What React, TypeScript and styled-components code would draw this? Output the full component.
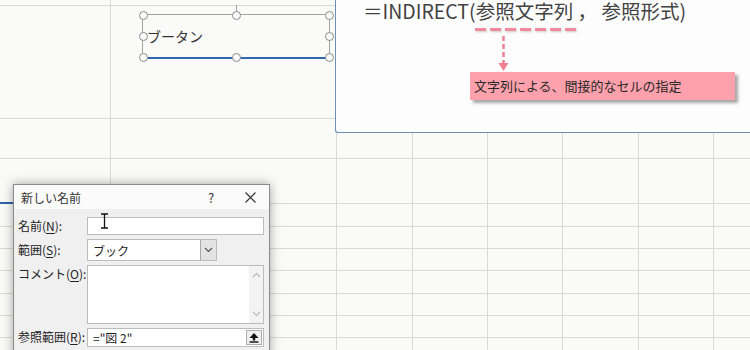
import React from 'react';
import styled, { createGlobalStyle } from 'styled-components';

const GlobalStyle = createGlobalStyle`
  html, body {
    margin: 0;
    padding: 0;
    width: 750px;
    height: 350px;
    overflow: hidden;
    background: #fafaf8;
  }
  body {
    font-family: "Noto Sans CJK JP", "Noto Sans", sans-serif;
    color: #333;
  }
`;

// column widths / row heights of the sheet (border included)
const COLS = [111, 226, 76, 75, 75, 76, 75, 80];
const ROWS = [6, 113, 40, 45, 23, 22, 22, 23, 22, 22, 22];

const Sheet = styled.div`
  position: relative;
  width: 750px;
  height: 350px;
  overflow: hidden;
`;

const Grid = styled.div`
  display: grid;
  grid-template-columns: ${COLS.map((c) => c + 'px').join(' ')};
  grid-template-rows: ${ROWS.map((r) => r + 'px').join(' ')};
`;

const Cell = styled.div<{ $selected?: boolean }>`
  box-sizing: border-box;
  border-right: 1px solid #d9d9d9;
  border-bottom: ${(p) => (p.$selected ? '2px solid #2d63aa' : '1px solid #d9d9d9')};
`;

/* ---------- callout panel (top right) ---------- */

const Callout = styled.div`
  position: absolute;
  left: 335px;
  top: -9px;
  right: -20px;
  height: 142px;
  box-sizing: border-box;
  background: #fdfdfd;
  border-left: 1.5px solid #6d8fb3;
  border-bottom: 1.5px solid #6d8fb3;
  border-bottom-left-radius: 3px;
  padding: 9px 0 0 27px;
  display: flex;
  flex-direction: column;
  align-items: flex-start;
`;

const Formula = styled.div`
  font-size: 19.5px;
  line-height: 22px;
  color: #424242;
  white-space: nowrap;
`;

const Marked = styled.span`
  position: relative;
  &::after {
    content: '';
    position: absolute;
    left: -1px;
    right: -5px;
    bottom: -6px;
    height: 3px;
    background: repeating-linear-gradient(90deg, #f2899a 0 11px, transparent 11px 15px);
    filter: drop-shadow(1px 1px 1px rgba(0, 0, 0, 0.2));
  }
`;

const Pointer = styled.svg`
  display: block;
  margin: 14px 0 0 135px;
`;

const Note = styled.div`
  margin-left: 107px;
  width: 265px;
  height: 28px;
  box-sizing: border-box;
  background: #ffa1ac;
  box-shadow: 3px 3px 3px rgba(0, 0, 0, 0.35);
  font-size: 13px;
  line-height: 28px;
  padding-left: 4px;
  color: #2a2a2a;
`;

/* ---------- selected text shape ---------- */

const Shape = styled.div`
  position: absolute;
  left: 142px;
  top: 14px;
  width: 188px;
  height: 45px;
  box-sizing: border-box;
  border: 1px solid #a3a3a3;
  border-bottom: 2px solid #2e69b0;
  display: flex;
  align-items: center;
  padding-left: 4px;
  font-size: 14px;
  color: #333;
`;

const Stem = styled.div`
  position: absolute;
  left: 50%;
  top: -10px;
  width: 1px;
  height: 10px;
  background: #a3a3a3;
`;

const Handle = styled.div<{ $x: number; $y: number }>`
  position: absolute;
  left: calc(${(p) => p.$x}% - 4.5px);
  top: calc(${(p) => p.$y}% - 4.5px);
  width: 9px;
  height: 9px;
  box-sizing: border-box;
  border: 1.5px solid #8c8c8c;
  border-radius: 50%;
  background: #fafafa;
`;

/* ---------- dialog ---------- */

const Dialog = styled.div`
  position: absolute;
  left: 13px;
  top: 184px;
  width: 257px;
  height: 200px;
  box-sizing: border-box;
  border: 1px solid #8a8a8a;
  background: #f0f0f0;
  box-shadow: 0 0 10px rgba(0, 0, 0, 0.35);
  font-size: 12px;
  color: #222;
`;

const TitleBar = styled.div`
  height: 24px;
  background: #fbfbfb;
  display: flex;
  align-items: center;
  padding-left: 7px;
`;

const Title = styled.div`
  flex: 1;
  font-size: 12px;
  color: #333;
`;

const TitleButton = styled.div<{ $w: number }>`
  width: ${(p) => p.$w}px;
  height: 24px;
  display: flex;
  align-items: center;
  justify-content: center;
  font-size: 13px;
  color: #333;
`;

const Form = styled.div`
  display: grid;
  grid-template-columns: 69px 177px;
  grid-template-rows: 18px 22px 59px 19px;
  row-gap: 4px;
  padding: 8px 5px 0 4px;
`;

const Label = styled.div<{ $top?: boolean }>`
  align-self: ${(p) => (p.$top ? 'start' : 'center')};
  margin-top: ${(p) => (p.$top ? '0' : '-2px')};
  white-space: nowrap;
  u {
    text-decoration-thickness: 1px;
    text-underline-offset: 2px;
  }
`;

const Field = styled.div<{ $w?: number }>`
  position: relative;
  box-sizing: border-box;
  width: ${(p) => (p.$w ? p.$w + 'px' : '100%')};
  border: 1px solid #bcbcbc;
  background: #fff;
  display: flex;
  align-items: stretch;
`;

const FieldText = styled.div`
  flex: 1;
  display: flex;
  align-items: center;
  padding-left: 5px;
`;

const DropButton = styled.div`
  width: 15px;
  background: #e3e3e3;
  border-left: 1px solid #a8a8a8;
  display: flex;
  align-items: center;
  justify-content: center;
`;

const ScrollTrack = styled.div`
  width: 14px;
  background: #f3f3f3;
  display: flex;
  flex-direction: column;
  justify-content: space-between;
  align-items: center;
  padding: 6px 0;
`;

const PickButton = styled.div`
  width: 16px;
  margin: 1px;
  box-sizing: border-box;
  border: 1px solid #adadad;
  background: #efefef;
  display: flex;
  align-items: center;
  justify-content: center;
`;

const Cursor = styled.svg`
  position: absolute;
  left: 12px;
  top: -5px;
`;

const Chevron = ({ up, color }: { up?: boolean; color: string }) => (
  <svg width="9" height="6" viewBox="0 0 9 6">
    <path d={up ? 'M1 5 L4.5 1.5 L8 5' : 'M1 1 L4.5 4.5 L8 1'} fill="none" stroke={color} strokeWidth="1.2" />
  </svg>
);

export default function App() {
  return (
    <>
      <GlobalStyle />
      <Sheet>
        <Grid>
          {ROWS.map((_, r) =>
            COLS.map((_, c) => <Cell key={`${r}-${c}`} $selected={r === 3 && c === 0} />)
          )}
        </Grid>

        <Shape>
          <Stem />
          ブータン
          {[0, 50, 100].map((x) =>
            [0, 50, 100]
              .filter((y) => !(x === 50 && y === 50))
              .map((y) => <Handle key={`${x}-${y}`} $x={x} $y={y} />)
          )}
        </Shape>

        <Callout>
          <Formula>
            ＝INDIRECT(<Marked>参照文字列</Marked> ， 参照形式)
          </Formula>
          <Pointer width="11" height="36" viewBox="0 0 11 36">
            <line x1="5.5" y1="0" x2="5.5" y2="28" stroke="#f07f92" strokeWidth="2.5" strokeDasharray="5 3" />
            <polygon points="0.5,27 10.5,27 5.5,35" fill="#f07f92" />
          </Pointer>
          <Note>文字列による、間接的なセルの指定</Note>
        </Callout>

        <Dialog>
          <TitleBar>
            <Title>新しい名前</Title>
            <TitleButton $w={40}>?</TitleButton>
            <TitleButton $w={38}>
              <svg width="11" height="11" viewBox="0 0 11 11">
                <path d="M0.5 0.5 L10.5 10.5 M10.5 0.5 L0.5 10.5" stroke="#333" strokeWidth="1.1" />
              </svg>
            </TitleButton>
          </TitleBar>
          <Form>
            <Label>
              名前(<u>N</u>):
            </Label>
            <Field>
              <Cursor width="9" height="16" viewBox="0 0 9 16">
                <path d="M1 1 H8 M4.5 1 V15 M1 15 H8" stroke="#111" strokeWidth="1.3" fill="none" />
              </Cursor>
            </Field>

            <Label>
              範囲(<u>S</u>):
            </Label>
            <Field $w={130}>
              <FieldText>ブック</FieldText>
              <DropButton>
                <Chevron color="#555" />
              </DropButton>
            </Field>

            <Label $top>
              コメント(<u>O</u>):
            </Label>
            <Field>
              <FieldText />
              <ScrollTrack>
                <Chevron up color="#b8b8b8" />
                <Chevron color="#b8b8b8" />
              </ScrollTrack>
            </Field>

            <Label>
              参照範囲(<u>R</u>):
            </Label>
            <Field>
              <FieldText>="図 2"</FieldText>
              <PickButton>
                <svg width="10" height="11" viewBox="0 0 10 11">
                  <polygon points="5,1 9.5,6 0.5,6" fill="#111" />
                  <rect x="3.8" y="5.5" width="2.4" height="3" fill="#111" />
                  <rect x="0.5" y="9.3" width="9" height="1.4" fill="#111" />
                </svg>
              </PickButton>
            </Field>
          </Form>
        </Dialog>
      </Sheet>
    </>
  );
}
